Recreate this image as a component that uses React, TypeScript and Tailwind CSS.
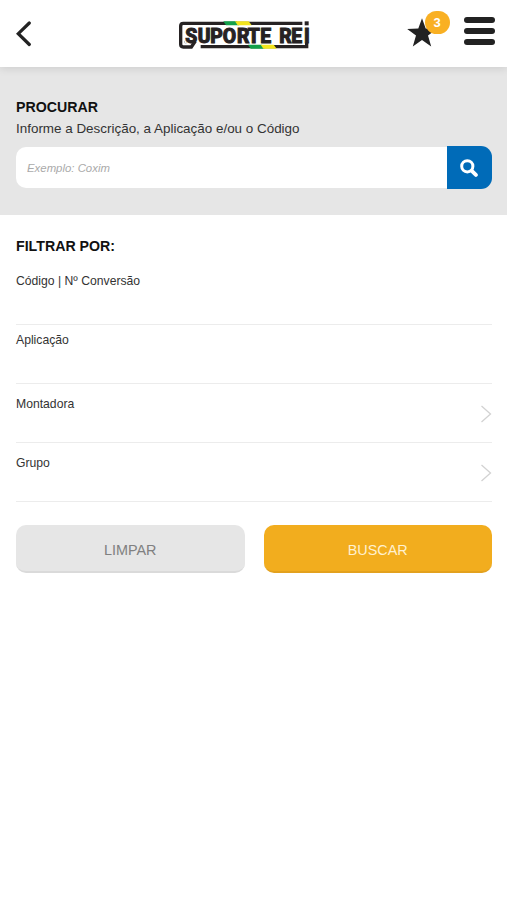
import React from "react";

interface FilterRowProps {
  label: string;
  className: string;
  hasOptions?: boolean;
}

function FilterRow({ label, className, hasOptions }: FilterRowProps) {
  return (
    <div className={`flex items-start justify-between border-b border-[#ececec] ${className}`}>
      <span className="text-[12.2px] leading-4 text-[#333]">{label}</span>
      {hasOptions && (
        <svg className="mt-[9px] h-[18px] w-3" viewBox="0 0 12 18" fill="none" stroke="#d2d2d2" strokeWidth="1.3">
          <path d="M1.5 1L10.5 9L1.5 17" />
        </svg>
      )}
    </div>
  );
}

function Logo() {
  return (
    <svg className="h-[50px] w-[150px]" viewBox="0 0 450 150" aria-label="Suporte Rei">
      <g fill="none" stroke="#262223" strokeWidth="10">
        <path d="M397 40H40Q32 40 32 48V103Q32 111 40 111H64L76 93" />
        <path d="M92 110H410V98" />
      </g>
      <rect x="404" y="34" width="12" height="12" fill="#262223" />
      <path d="M160 34H200L208 46H168Z" fill="#12a04a" />
      <path d="M195 34H236L245 46H203Z" fill="#f2e51d" />
      <path d="M234 104H276L284 116H242Z" fill="#12a04a" />
      <path d="M272 104H311L320 116H280Z" fill="#f2e51d" />
      <circle cx="47" cy="96" r="4" fill="none" stroke="#999" strokeWidth="1.5" />
      <text
        x="46 83 121 158 201 233 271 328 364 402"
        y="99"
        fill="#262223"
        stroke="#262223"
        strokeWidth="3"
        fontFamily="Roboto, sans-serif"
        fontWeight="800"
        fontSize="58"
      >
        SUPORTEREI
      </text>
    </svg>
  );
}

function Header() {
  return (
    <header className="relative flex h-[67px] bg-white shadow-[0_2px_8px_rgba(0,0,0,0.1)]">
      <button className="ml-4 mt-[21px] h-[26px] w-4" aria-label="Voltar">
        <svg viewBox="0 0 16 26" fill="none" stroke="#222" strokeWidth="3.2" strokeLinecap="round">
          <path d="M13.3 2L2.3 12.7L13.3 23.5" strokeLinejoin="miter" />
        </svg>
      </button>
      <div className="ml-[138px] mt-2.5">
        <Logo />
      </div>
      <div className="ml-auto mr-[12.5px] flex gap-3.5">
        <div className="relative mt-[18px] h-[30px] w-[42px]">
          <svg className="-ml-px h-[30px] w-[30px]" viewBox="0 0 30 30" fill="#222">
            <path d="M15 .2L18.7 10.5L29.8 10.9L21 17.5L24.2 28.5L15 22L5.8 28.5L9 17.5L.2 10.9L11.3 10.5Z" />
          </svg>
          <span className="absolute -top-[7px] left-[17px] flex h-[23px] w-[25px] items-center justify-center rounded-full bg-[#f9b023] text-[13px] font-bold text-white">
            3
          </span>
        </div>
        <button className="mt-[17px] flex h-7 w-[31px] flex-col gap-[5px]" aria-label="Menu">
          <span className="h-1.5 w-full rounded-full bg-[#222]" />
          <span className="h-1.5 w-full rounded-full bg-[#222]" />
          <span className="h-1.5 w-full rounded-full bg-[#222]" />
        </button>
      </div>
    </header>
  );
}

function SearchPanel() {
  return (
    <section className="h-[148px] bg-[#e6e6e6] px-4 pt-[30px]">
      <h1 className="text-[14.2px] font-bold leading-5 text-[#111]">PROCURAR</h1>
      <p className="mt-0.5 text-[13.43px] leading-5 text-[#333]">
        Informe a Descrição, a Aplicação e/ou o Código
      </p>
      <div className="mt-[7px] flex h-[43px] w-[476px] items-center">
        <input
          className="h-[41px] min-w-0 flex-1 rounded-l-[10px] bg-white px-[11px] text-[11.4px] italic text-[#333] outline-none placeholder:text-[#aaa]"
          placeholder="Exemplo: Coxim"
        />
        <button className="flex h-[43px] w-[45px] items-center justify-center rounded-r-[11px] bg-[#006bb8] pr-0.5" aria-label="Buscar">
          <svg className="h-[18px] w-[18px]" viewBox="0 0 18 18" fill="none" stroke="white">
            <circle cx="7.3" cy="7.3" r="5.6" strokeWidth="3" />
            <path d="M11.8 11.8L15.9 15.9" strokeWidth="3.8" strokeLinecap="round" />
          </svg>
        </button>
      </div>
    </section>
  );
}

export default function App() {
  return (
    <div className="min-h-[900px] w-full bg-white font-['Liberation_Sans',Arial,sans-serif]">
      <Header />
      <SearchPanel />
      <main className="px-4 pt-[21px]">
        <h2 className="text-[14.2px] font-bold leading-5 text-[#111]">FILTRAR POR:</h2>
        <div className="w-[476px]">
          <FilterRow label="Código | Nº Conversão" className="h-[69px] pt-[17px]" />
          <FilterRow label="Aplicação" className="h-[59px] pt-[7px]" />
          <FilterRow label="Montadora" className="h-[59px] pt-3" hasOptions />
          <FilterRow label="Grupo" className="h-[59px] pt-3" hasOptions />
        </div>
        <div className="mt-[23px] flex w-[476px] gap-[19px]">
          <button className="h-12 flex-1 rounded-[10px] border-b-2 border-[#dadada] bg-[#e6e6e6] pt-[5px] text-[14.4px] text-[#808080]">
            LIMPAR
          </button>
          <button className="h-12 flex-1 rounded-[10px] border-b-2 border-[#e3a11e] bg-[#f2ad1e] pt-[5px] text-[14.4px] text-[#fff1d0]">
            BUSCAR
          </button>
        </div>
      </main>
    </div>
  );
}
